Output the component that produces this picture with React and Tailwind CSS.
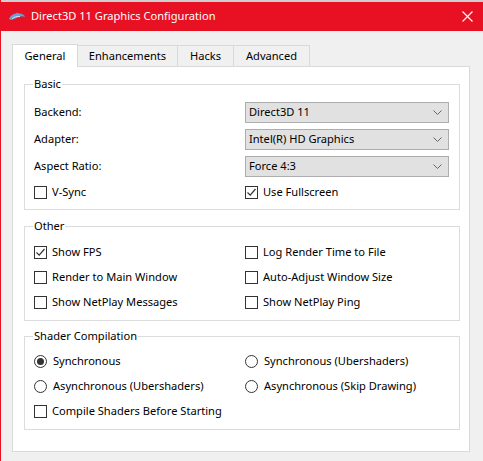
import React from 'react';

const font = { fontFamily: '"Noto Sans", "Liberation Sans", sans-serif' };

const Check = ({ checked }) => (
  <span className="w-[13px] h-[13px] border border-[#333] bg-white flex items-center justify-center shrink-0">
    {checked && (
      <svg width="11" height="11" viewBox="0 0 11 11">
        <path d="M1.5 5.5 L4.2 8.2 L9.5 2" fill="none" stroke="#333" strokeWidth="1.2" />
      </svg>
    )}
  </span>
);

const Radio = ({ checked }) => (
  <span className="w-[13px] h-[13px] rounded-full border border-[#333] bg-white flex items-center justify-center shrink-0">
    {checked && <span className="w-[7px] h-[7px] rounded-full bg-[#333]" />}
  </span>
);

const Option = ({ label, checked, radio }) => (
  <div className="flex items-center gap-[5px] h-[25px]">
    {radio ? <Radio checked={checked} /> : <Check checked={checked} />}
    <span className={radio ? 'pl-[1px]' : ''}>{label}</span>
  </div>
);

const Combo = ({ value }) => (
  <div className="w-[204px] h-[21px] bg-[#e1e1e1] border border-[#adadad] flex items-center justify-between pl-[3px] pr-[6px]">
    <span>{value}</span>
    <svg width="9" height="6" viewBox="0 0 9 6">
      <path d="M0.5 0.5 L4.5 4.5 L8.5 0.5" fill="none" stroke="#666" strokeWidth="1" />
    </svg>
  </div>
);

const Group = ({ title, children, className }) => (
  <div className={`relative border border-[#dcdcdc] ${className}`}>
    <span className="absolute -top-[9px] left-[8px] bg-white px-[1px] leading-[16px]">{title}</span>
    {children}
  </div>
);

const tabs = [
  { t: 'General', w: 'w-[66px]' },
  { t: 'Enhancements', w: 'w-[100px]' },
  { t: 'Hacks', w: 'w-[56px]' },
  { t: 'Advanced', w: 'w-[76px]' },
];

export default function App() {
  return (
    <div className="w-[483px] h-[461px] bg-[#f0f0f0] border-l border-[#e81123] text-[11.1px] text-black overflow-hidden" style={font}>
      <div className="h-[2px] bg-[#cfcfcf]" />
      <div className="h-[29px] bg-[#e81123] flex items-center text-white">
        <svg width="18" height="12" viewBox="0 0 18 12" className="ml-[7px]">
          <path d="M1 8 C3 3 9 1 14 3 C15.5 3.6 16.5 4.6 17 6 C15 5 13 5 11 6 C8 7.5 5 8 3 9 Z" fill="#6a9fd8" />
          <path d="M4 8 C6 6 9 5 12 5.5" fill="none" stroke="#cfe3f7" strokeWidth="1" />
          <path d="M7 4 L9 1.5 L10 3.5 Z" fill="#6a9fd8" />
        </svg>
        <span className="ml-[5px] text-[11.1px]">Direct3D 11 Graphics Configuration</span>
        <svg width="11" height="11" viewBox="0 0 11 11" className="ml-auto mr-[10px]">
          <path d="M0.5 0.5 L10.5 10.5 M10.5 0.5 L0.5 10.5" stroke="#fff" strokeWidth="1.1" />
        </svg>
      </div>
      <div className="pl-[11px] pt-[12px]">
        <div className="flex items-end h-[23px] relative z-10">
          {tabs.map(({ t, w }, i) =>
            i === 0 ? (
              <div key={t} className={`${w} h-[23px] bg-white border border-b-0 border-[#d9d9d9] flex items-center justify-center -mb-px`}>
                {t}
              </div>
            ) : (
              <div key={t} className={`${w} h-[21px] bg-[#f0f0f0] border border-l-0 border-b-0 border-[#d9d9d9] flex items-center justify-center`}>
                {t}
              </div>
            )
          )}
        </div>
        <div className="w-[458px] h-[386px] bg-white border border-[#d9d9d9] pl-[11px] pt-[17px]">
          <Group title="Basic" className="w-[436px] h-[126px] pl-[9px] pt-[14px]">
            <div className="flex items-center justify-between pr-[10px] h-[27px]">
              <span>Backend:</span>
              <Combo value="Direct3D 11" />
            </div>
            <div className="flex items-center justify-between pr-[10px] h-[27px]">
              <span>Adapter:</span>
              <Combo value="Intel(R) HD Graphics" />
            </div>
            <div className="flex items-center justify-between pr-[10px] h-[27px]">
              <span>Aspect Ratio:</span>
              <Combo value="Force 4:3" />
            </div>
            <div className="grid grid-cols-[211px_1fr]">
              <Option label="V-Sync" />
              <Option label="Use Fullscreen" checked />
            </div>
          </Group>
          <Group title="Other" className="w-[436px] h-[95px] mt-[16px] pl-[9px] pt-[13px]">
            <div className="grid grid-cols-[211px_1fr]">
              <Option label="Show FPS" checked />
              <Option label="Log Render Time to File" />
              <Option label="Render to Main Window" />
              <Option label="Auto-Adjust Window Size" />
              <Option label="Show NetPlay Messages" />
              <Option label="Show NetPlay Ping" />
            </div>
          </Group>
          <Group title="Shader Compilation" className="w-[436px] h-[94px] mt-[15px] pl-[9px] pt-[12px]">
            <div className="grid grid-cols-[211px_1fr]">
              <Option label="Synchronous" checked radio />
              <Option label="Synchronous (Ubershaders)" radio />
              <Option label="Asynchronous (Ubershaders)" radio />
              <Option label="Asynchronous (Skip Drawing)" radio />
              <Option label="Compile Shaders Before Starting" />
            </div>
          </Group>
        </div>
      </div>
    </div>
  );
}
